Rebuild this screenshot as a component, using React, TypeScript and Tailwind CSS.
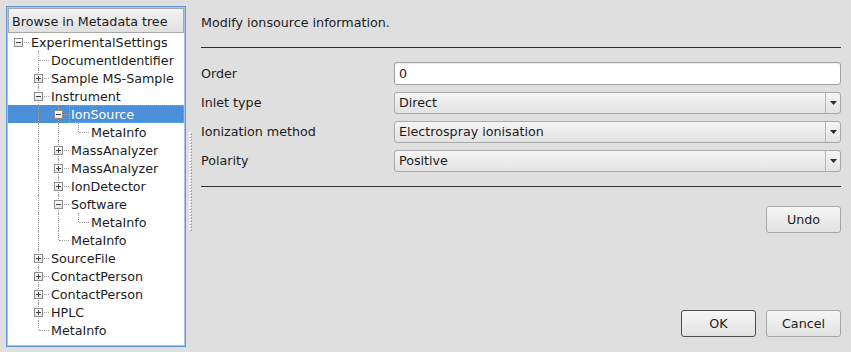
import React from "react";

type Node = { l: number; t: string; exp?: "+" | "-"; sel?: boolean };

const nodes: Node[] = [
  { l: 0, t: "ExperimentalSettings", exp: "-" },
  { l: 1, t: "DocumentIdentifier" },
  { l: 1, t: "Sample MS-Sample", exp: "+" },
  { l: 1, t: "Instrument", exp: "-" },
  { l: 2, t: "IonSource", exp: "-", sel: true },
  { l: 3, t: "MetaInfo" },
  { l: 2, t: "MassAnalyzer", exp: "+" },
  { l: 2, t: "MassAnalyzer", exp: "+" },
  { l: 2, t: "IonDetector", exp: "+" },
  { l: 2, t: "Software", exp: "-" },
  { l: 3, t: "MetaInfo" },
  { l: 2, t: "MetaInfo" },
  { l: 1, t: "SourceFile", exp: "+" },
  { l: 1, t: "ContactPerson", exp: "+" },
  { l: 1, t: "ContactPerson", exp: "+" },
  { l: 1, t: "HPLC", exp: "+" },
  { l: 1, t: "MetaInfo" },
];

function hasLater(i: number): boolean {
  const lv = nodes[i].l;
  for (let j = i + 1; j < nodes.length; j++) {
    if (nodes[j].l < lv) return false;
    if (nodes[j].l === lv) return true;
  }
  return false;
}

function ancestorHasLater(i: number, k: number): boolean {
  for (let j = i - 1; j >= 0; j--) {
    if (nodes[j].l === k) return hasLater(j);
    if (nodes[j].l < k) return false;
  }
  return false;
}

const FONT = { fontFamily: '"DejaVu Sans", "Liberation Sans", sans-serif' };

function Expander({ kind }: { kind: "+" | "-" }) {
  return (
    <div className="absolute left-[6px] top-[5px] w-[9px] h-[9px] border border-[#8c8c8c] bg-gradient-to-b from-[#ffffff] to-[#e6e6e6] z-10">
      <div className="absolute left-[1px] top-[3px] w-[5px] h-px bg-[#404040]" />
      {kind === "+" && <div className="absolute left-[3px] top-[1px] w-px h-[5px] bg-[#404040]" />}
    </div>
  );
}

function TreeRow({ n, i }: { n: Node; i: number }) {
  const later = hasLater(i);
  const cells: React.ReactNode[] = [];
  for (let k = 0; k < n.l; k++) {
    const show = k >= 1 && ancestorHasLater(i, k);
    cells.push(
      <div key={k} className="relative w-[20px] h-full shrink-0">
        {show && <div className="absolute left-[10px] top-0 bottom-0 border-l border-dotted border-[#a0a0a0]" />}
      </div>
    );
  }
  cells.push(
    <div key="own" className="relative w-[20px] h-full shrink-0">
      {n.l >= 1 && (
        <div
          className={
            "absolute left-[10px] top-0 border-l border-dotted border-[#a0a0a0] " +
            (later ? "bottom-0" : "h-[9px]")
          }
        />
      )}
      <div className="absolute left-[11px] top-[9px] w-[10px] border-t border-dotted border-[#a0a0a0]" />
      {n.exp && <Expander kind={n.exp} />}
    </div>
  );
  return (
    <div className={"flex h-[18px] items-center " + (n.sel ? "bg-[#4a8fda] text-white" : "text-[#1b1b1b]")}>
      {cells}
      <div className="relative flex-1 h-full flex items-center pl-[3px] whitespace-nowrap">
        {n.sel && <div className="absolute inset-y-0 left-[1px] right-0 border border-dotted border-[#e39a45]" />}
        <span className="leading-[18px] pt-[2px]">{n.t}</span>
      </div>
    </div>
  );
}

function Combo({ value }: { value: string }) {
  return (
    <div className="flex h-[22px] w-full rounded-[3px] border border-[#a9a9a9] bg-gradient-to-b from-[#f5f5f5] to-[#e3e3e3] text-[#1b1b1b]">
      <div className="flex-1 flex items-center pl-[4px] leading-none">{value}</div>
      <div className="w-[15px] border-l border-[#b4b4b4] flex items-center justify-center">
        <svg width="7" height="4" viewBox="0 0 7 4">
          <polygon points="0,0 7,0 3.5,4" fill="#2e2e2e" />
        </svg>
      </div>
    </div>
  );
}

function Button({ label, def }: { label: string; def?: boolean }) {
  return (
    <div
      className={
        "w-[75px] h-[27px] rounded-[3px] border flex items-center justify-center bg-gradient-to-b from-[#f6f6f6] to-[#e2e2e2] text-[#1b1b1b] " +
        (def ? "border-[#4e4e4e]" : "border-[#a6a6a6]")
      }
    >
      {label}
    </div>
  );
}

export default function App() {
  return (
    <div className="w-[851px] h-[352px] bg-[#e0dfdf] flex text-[12.7px] overflow-hidden" style={FONT}>
      {/* Left tree panel */}
      <div className="pl-[6px] pt-[6px]">
        <div className="w-[180px] h-[341px] border border-[#5f95d8] shadow-[inset_0_0_0_1px_#a9c6ec] bg-white p-px">
          <div className="h-[25px] border border-[#a8a8a8] bg-gradient-to-b from-[#f3f3f3] to-[#e0e0e0] flex items-center pl-[3px] pt-[2px] text-[#1b1b1b] whitespace-nowrap">
            Browse in Metadata tree
          </div>
          <div>
            {nodes.map((n, i) => (
              <TreeRow key={i} n={n} i={i} />
            ))}
          </div>
        </div>
      </div>

      {/* Splitter */}
      <div className="w-[15px] pl-[3px] pt-[132px] flex flex-col">
        {Array.from({ length: 33 }).map((_, i) => (
          <div key={i} className="w-[2px] h-[2px] mb-px bg-white shadow-[1px_1px_0_#b0b0b0]" />
        ))}
      </div>

      {/* Right panel */}
      <div className="flex-1 flex flex-col pr-[10px] text-[#1b1b1b]">
        <div className="pt-[16px] leading-[14px] h-[29px]">Modify ionsource information.</div>
        <div className="mt-[18px] h-px bg-[#2f2f2f]" />
        <div className="mt-[14px] flex flex-col gap-[7px]">
          <div className="flex items-center">
            <div className="w-[193px]">Order</div>
            <div className="flex-1 h-[23px] rounded-[3px] border border-[#a2a2a2] bg-white shadow-[inset_0_1px_1px_rgba(0,0,0,0.08)] flex items-center pl-[4px]">
              0
            </div>
          </div>
          <div className="flex items-center">
            <div className="w-[193px]">Inlet type</div>
            <div className="flex-1">
              <Combo value="Direct" />
            </div>
          </div>
          <div className="flex items-center">
            <div className="w-[193px]">Ionization method</div>
            <div className="flex-1">
              <Combo value="Electrospray ionisation" />
            </div>
          </div>
          <div className="flex items-center">
            <div className="w-[193px]">Polarity</div>
            <div className="flex-1">
              <Combo value="Positive" />
            </div>
          </div>
        </div>
        <div className="mt-[14px] h-px bg-[#2f2f2f]" />
        <div className="mt-[19px] flex justify-end">
          <Button label="Undo" />
        </div>
        <div className="flex-1" />
        <div className="mb-[15px] flex justify-end gap-[10px]">
          <Button label="OK" def />
          <Button label="Cancel" />
        </div>
      </div>
    </div>
  );
}
